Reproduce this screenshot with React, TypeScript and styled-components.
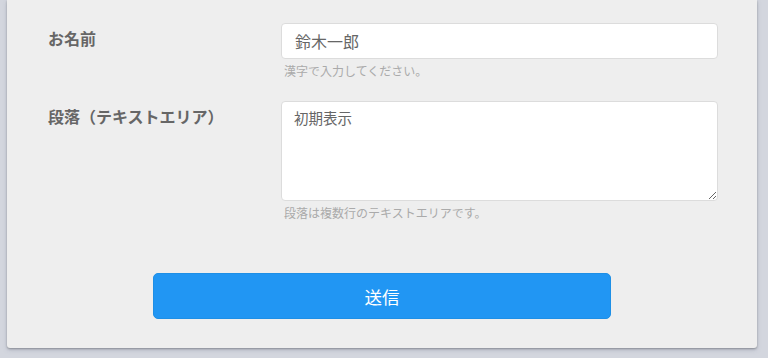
import styled, { createGlobalStyle } from "styled-components";

const GlobalStyle = createGlobalStyle`
  html, body {
    margin: 0;
    padding: 0;
    background: #d3d6de;
  }
  body {
    font-family: "Noto Sans CJK JP", "Noto Sans", sans-serif;
    color: #666;
  }
`;

const Page = styled.div`
  width: 768px;
  height: 358px;
  padding: 0 11px 0 7px;
  box-sizing: border-box;
  overflow: hidden;
`;

const Card = styled.form`
  background: #eeeeee;
  height: 348px;
  box-sizing: border-box;
  padding: 23px 39px 0 41px;
  border-radius: 0 0 3px 3px;
  box-shadow: 0 1px 2px rgba(0, 0, 0, 0.25), 0 2px 4px rgba(120, 128, 150, 0.35);
`;

const Row = styled.div<{ $mb: number }>`
  display: grid;
  grid-template-columns: 233px 1fr;
  margin-bottom: ${(p) => p.$mb}px;
`;

const Label = styled.label`
  padding: 4px 0 0 0;
  font-size: 16px;
  font-weight: bold;
  line-height: 22px;
  color: #666;
`;

const Field = styled.div`
  display: flex;
  flex-direction: column;
`;

const fieldBase = `
  box-sizing: border-box;
  width: 100%;
  margin: 0;
  border: 1px solid #dcdcdc;
  border-radius: 4px;
  background: #fff;
  font-family: "Noto Sans CJK JP", "Noto Sans", sans-serif;
  color: #666;
  outline: none;
`;

const Input = styled.input`
  ${fieldBase}
  height: 36px;
  padding: 0 13px;
  font-size: 16px;
`;

const TextArea = styled.textarea`
  ${fieldBase}
  display: block;
  height: 100px;
  padding: 6px 12px;
  font-size: 14.5px;
  line-height: 20px;
  resize: vertical;
`;

const Help = styled.p`
  margin: 4px 0 0 3px;
  font-size: 12px;
  line-height: 16px;
  color: #aaa;
`;

const Actions = styled.div`
  display: flex;
  padding-left: 105px;
`;

const Submit = styled.button`
  width: 458px;
  height: 46px;
  border: 1px solid #1e8fe6;
  border-radius: 5px;
  background: #2196f3;
  color: #fff;
  font-family: "Noto Sans CJK JP", "Noto Sans", sans-serif;
  font-size: 17.5px;
  cursor: pointer;
`;

export default function App() {
  return (
    <Page>
      <GlobalStyle />
      <Card onSubmit={(e) => e.preventDefault()}>
        <Row $mb={22}>
          <Label>お名前</Label>
          <Field>
            <Input defaultValue="鈴木一郎" />
            <Help>漢字で入力してください。</Help>
          </Field>
        </Row>
        <Row $mb={52}>
          <Label>段落（テキストエリア）</Label>
          <Field>
            <TextArea defaultValue="初期表示" />
            <Help>段落は複数行のテキストエリアです。</Help>
          </Field>
        </Row>
        <Actions>
          <Submit type="submit">送信</Submit>
        </Actions>
      </Card>
    </Page>
  );
}
